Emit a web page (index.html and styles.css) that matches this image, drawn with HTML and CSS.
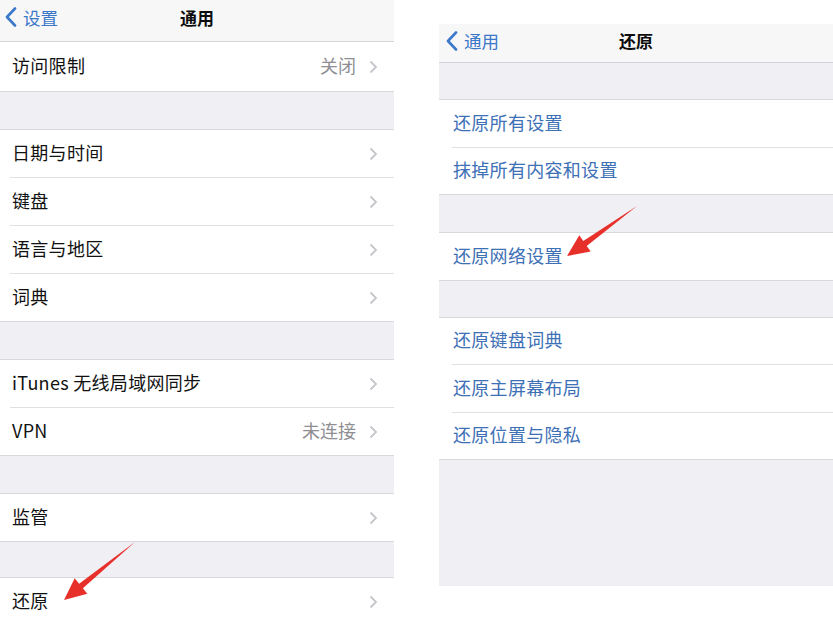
FILE: index.html
```html
<!DOCTYPE html>
<html lang="zh-CN">
<head>
<meta charset="utf-8">
<title>通用 / 还原</title>
<link rel="stylesheet" href="styles.css">
</head>
<body>
<div class="page">
  <section class="panel left">
    <div class="nav nav-left">
      <div class="back">
        <svg class="back-chev" width="12" height="20" viewBox="0 0 12 20"><polyline points="10,1.5 2,10 10,18.5" fill="none" stroke="#3b78c9" stroke-width="2.6" stroke-linecap="round" stroke-linejoin="round"/></svg>
        <span>设置</span>
      </div>
      <div class="title">通用</div>
    </div>
    <div class="group">
      <div class="row row-first"><span class="label">访问限制</span><span class="value">关闭</span><svg class="chev" width="9" height="14" viewBox="0 0 9 14"><polyline points="1.5,1.5 7,7 1.5,12.5" fill="none" stroke="#c6c6cb" stroke-width="1.8"/></svg></div>
    </div>
    <div class="gap"></div>
    <div class="group">
      <div class="row"><span class="label">日期与时间</span><svg class="chev" width="9" height="14" viewBox="0 0 9 14"><polyline points="1.5,1.5 7,7 1.5,12.5" fill="none" stroke="#c6c6cb" stroke-width="1.8"/></svg></div>
      <div class="row"><span class="label">键盘</span><svg class="chev" width="9" height="14" viewBox="0 0 9 14"><polyline points="1.5,1.5 7,7 1.5,12.5" fill="none" stroke="#c6c6cb" stroke-width="1.8"/></svg></div>
      <div class="row"><span class="label">语言与地区</span><svg class="chev" width="9" height="14" viewBox="0 0 9 14"><polyline points="1.5,1.5 7,7 1.5,12.5" fill="none" stroke="#c6c6cb" stroke-width="1.8"/></svg></div>
      <div class="row"><span class="label">词典</span><svg class="chev" width="9" height="14" viewBox="0 0 9 14"><polyline points="1.5,1.5 7,7 1.5,12.5" fill="none" stroke="#c6c6cb" stroke-width="1.8"/></svg></div>
    </div>
    <div class="gap"></div>
    <div class="group">
      <div class="row"><span class="label">iTunes 无线局域网同步</span><svg class="chev" width="9" height="14" viewBox="0 0 9 14"><polyline points="1.5,1.5 7,7 1.5,12.5" fill="none" stroke="#c6c6cb" stroke-width="1.8"/></svg></div>
      <div class="row"><span class="label">VPN</span><span class="value">未连接</span><svg class="chev" width="9" height="14" viewBox="0 0 9 14"><polyline points="1.5,1.5 7,7 1.5,12.5" fill="none" stroke="#c6c6cb" stroke-width="1.8"/></svg></div>
    </div>
    <div class="gap"></div>
    <div class="group">
      <div class="row"><span class="label">监管</span><svg class="chev" width="9" height="14" viewBox="0 0 9 14"><polyline points="1.5,1.5 7,7 1.5,12.5" fill="none" stroke="#c6c6cb" stroke-width="1.8"/></svg></div>
    </div>
    <div class="gap gap-short"></div>
    <div class="group">
      <div class="row"><span class="label">还原</span><svg class="chev" width="9" height="14" viewBox="0 0 9 14"><polyline points="1.5,1.5 7,7 1.5,12.5" fill="none" stroke="#c6c6cb" stroke-width="1.8"/></svg></div>
    </div>
  </section>

  <section class="panel right">
    <div class="nav nav-right">
      <div class="back">
        <svg class="back-chev" width="12" height="20" viewBox="0 0 12 20"><polyline points="10,1.5 2,10 10,18.5" fill="none" stroke="#3b78c9" stroke-width="2.6" stroke-linecap="round" stroke-linejoin="round"/></svg>
        <span>通用</span>
      </div>
      <div class="title">还原</div>
    </div>
    <div class="gap gap-r"></div>
    <div class="group">
      <div class="row row-r"><span class="action">还原所有设置</span></div>
      <div class="row row-r"><span class="action">抹掉所有内容和设置</span></div>
    </div>
    <div class="gap"></div>
    <div class="group">
      <div class="row row-r"><span class="action">还原网络设置</span></div>
    </div>
    <div class="gap gap-r"></div>
    <div class="group">
      <div class="row row-r"><span class="action">还原键盘词典</span></div>
      <div class="row row-r"><span class="action">还原主屏幕布局</span></div>
      <div class="row row-r"><span class="action">还原位置与隐私</span></div>
    </div>
  </section>

  <svg class="arrows" width="833" height="624" viewBox="0 0 833 624">
    <polygon points="135,542 82.9,588.3 87.3,593.8 64,600 74.7,578.3 79.1,583.7" fill="#e8302b"/>
    <polygon points="637,206 586.7,245.9 590.7,251.6 567,256 579.3,235.2 583.3,240.9" fill="#e8302b"/>
  </svg>
</div>
</body>
</html>
```

FILE: styles.css
```css
html, body {
  margin: 0;
  padding: 0;
  background: #ffffff;
}

body {
  width: 833px;
  height: 624px;
  overflow: hidden;
  font-family: "Noto Sans CJK SC", "Noto Sans", sans-serif;
  color: #111111;
}

.page {
  position: relative;
  display: flex;
  align-items: flex-start;
  gap: 45px;
  width: 833px;
  height: 624px;
}

.panel {
  width: 394px;
  flex: 0 0 394px;
  background: #efeff4;
  overflow: hidden;
}

.left {
  height: 624px;
}

.right {
  margin-top: 24px;
  height: 562px;
}

.nav {
  position: relative;
  display: flex;
  align-items: center;
  justify-content: center;
  background: #f7f7f8;
  border-bottom: 1px solid #d4d4d8;
  box-sizing: border-box;
}

.nav-left {
  height: 42px;
  padding-bottom: 7px;
}

.nav-right {
  height: 39px;
  padding-bottom: 5px;
}

.title {
  font-size: 17px;
  font-weight: 700;
  color: #0d0d0d;
}

.back {
  position: absolute;
  left: 5px;
  top: 0;
  bottom: 7px;
  display: flex;
  align-items: center;
  gap: 6px;
  font-size: 17.5px;
  color: #3b78c9;
}

.nav-right .back {
  left: 7px;
  bottom: 5px;
}

.back-chev {
  display: block;
}

.group {
  background: #ffffff;
  border-bottom: 1px solid #d9d9dd;
}

.gap {
  height: 37px;
  border-bottom: 1px solid #d9d9dd;
}

.gap-r {
  height: 36px;
}

.gap-short {
  height: 35px;
}

.row {
  display: flex;
  align-items: center;
  height: 47px;
  margin-left: 10px;
  padding-left: 2px;
  padding-right: 16px;
  font-size: 18px;
}

.row-first {
  height: 49px;
}

.row + .row {
  border-top: 1px solid #e0e0e4;
}

.row-r {
  height: 46.5px;
  margin-left: 13px;
  padding-left: 1px;
}

.label {
  flex: 1;
  color: #111111;
  letter-spacing: 0.3px;
  margin-top: -3px;
}

.value {
  color: #8e8e93;
  margin-right: 13px;
  margin-top: -3px;
}

.chev {
  display: block;
}

.action {
  color: #3e70b6;
  letter-spacing: 0.3px;
  margin-top: -3px;
}

.arrows {
  position: absolute;
  left: 0;
  top: 0;
  pointer-events: none;
}
```
